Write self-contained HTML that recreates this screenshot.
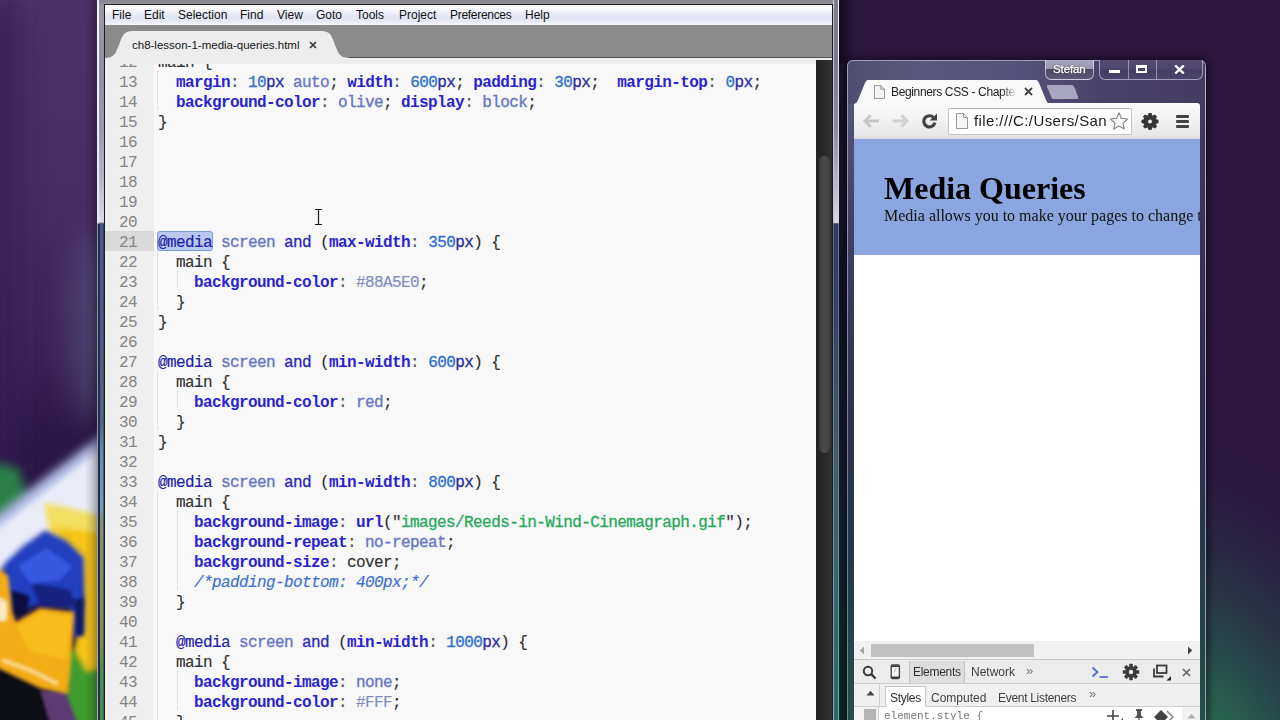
<!DOCTYPE html>
<html>
<head>
<meta charset="utf-8">
<title>Screen</title>
<style>
*{margin:0;padding:0;box-sizing:border-box;}
html,body{width:1280px;height:720px;overflow:hidden;background:#2a1640;}
body{position:relative;font-family:"Liberation Sans",sans-serif;}
.abs{position:absolute;}
#wall{position:absolute;left:0;top:0;width:1280px;height:720px;
 background:
  radial-gradient(ellipse 300px 440px at 1160px 850px, rgba(42,130,86,1) 0%, rgba(40,112,82,.95) 32%, rgba(38,80,76,.8) 52%, rgba(40,48,72,.6) 72%, rgba(42,32,70,.3) 86%, rgba(44,23,63,0) 100%),
  #2c173f;
}
#wallL{position:absolute;left:0;top:0;width:110px;height:720px;overflow:hidden;
 background:
  radial-gradient(ellipse 90px 260px at 105px 330px, rgba(92,92,130,.9) 0%, rgba(80,70,120,.5) 50%, rgba(70,50,110,0) 100%),
  linear-gradient(90deg,#3d2460 0%,#4a3266 60%,#4a3468 100%);
}
/* ---------- Sublime window ---------- */
#sub{position:absolute;left:97px;top:0;width:743px;height:720px;}
#sub .frame{position:absolute;left:1px;top:0;width:741px;height:720px;
 background:linear-gradient(180deg,#85858f 0px,#9a9aa4 6px,#908fa8 70px,#9a99b4 130px,#b8b8cc 180px,#dcdce8 222px,#343c5e 224px,#3a4666 330px,#465e6c 460px,#3a6668 600px,#2a6a66 720px);}
#sub .edgeL{position:absolute;left:0;top:0;width:2px;height:720px;background:linear-gradient(180deg,#f4f4f8 0,#e8e8f0 222px,#8890b0 224px,#8a9ab8 460px,#9ab0b8 720px);}
#sub .midL{position:absolute;left:3px;top:224px;width:3px;height:496px;background:linear-gradient(180deg,#4c5684 0,#56628e 200px,#6a8ab8 230px,#7a98b8 280px,#8e8e72 300px,#90885a 420px,#5a8a50 440px,#4e8a4c 496px);}
#sub .darkL{position:absolute;left:1px;top:224px;width:2px;height:496px;background:#262c44;}
#sub .edgeR{position:absolute;left:741px;top:0;width:1px;height:720px;background:linear-gradient(180deg,#f0f0f6 0,#dcdce6 222px,#6a7498 224px,#6a8aa0 460px,#7ab0b8 720px);}
#sub .edgeR2{position:absolute;left:736px;top:0;width:1px;height:720px;background:linear-gradient(180deg,#c8c8d8 0,#c0c0d0 222px,#5a6488 224px,#6a8aa0 460px,#8ab0c0 720px);}
#sub .bodyR{position:absolute;left:737px;top:0;width:4px;height:223px;background:linear-gradient(180deg,#7c7c90 0,#7a7a94 60px,#8c8ca8 130px,#b4b4cc 180px,#d8d8e8 223px);}
#sub .inner{position:absolute;left:7px;top:4px;width:729px;height:716px;background:#1c1c1c;}
#menubar{position:absolute;left:105px;top:5px;width:727px;height:20px;
 background:linear-gradient(180deg,#ffffff 0%,#f4f5fb 30%,#e2e5f4 55%,#e6e8f5 80%,#f6f7fc 100%);font-size:12px;color:#111;}
#menubar span{position:absolute;top:3px;white-space:nowrap;}
#tabbar{position:absolute;left:105px;top:25px;width:727px;height:33px;background:#8b8b8b;}
#tabline{position:absolute;left:105px;top:58px;width:727px;height:6px;background:#ededed;}
#tabtxt{position:absolute;left:132px;top:39px;font-size:11.5px;color:#151515;white-space:nowrap;}
#editor{position:absolute;left:105px;top:64px;width:711px;height:656px;background:#f8f8f8;overflow:hidden;}
#gutter{position:absolute;left:0;top:0;width:49px;height:656px;background:#efefef;}
#vscroll{position:absolute;left:816px;top:60px;width:16px;height:660px;background:linear-gradient(90deg,#222 0,#2a2a2a 60%,#323232 100%);}
#vthumb{position:absolute;left:819px;top:156px;width:11px;height:297px;border-radius:5px;background:linear-gradient(90deg,#3a3a3a,#4a4a4a 45%,#404040);}
.ln{position:absolute;left:0;width:32px;text-align:right;font:16px/20px "Liberation Mono",monospace;letter-spacing:-.6px;color:#858585;height:20px;margin-top:2px;}
.cl{position:absolute;left:53px;font:16px/20px "Liberation Mono",monospace;letter-spacing:-.6px;color:#303030;white-space:pre;height:20px;margin-top:2px;-webkit-text-stroke:.15px;}
.p{color:#2a24cf;font-weight:bold;-webkit-text-stroke:0;}
.n{color:#2f6fd0;-webkit-text-stroke:.3px;}
.u{color:#2a2aa2;-webkit-text-stroke:.3px;}
.v{color:#6677c6;-webkit-text-stroke:.35px;}
.h{color:#7f8cbd;}
.m{color:#2020a8;-webkit-text-stroke:.15px;}
.a{color:#2a2ab8;-webkit-text-stroke:.3px;}
.s{color:#26a95c;-webkit-text-stroke:.3px;}
.f{color:#2a24cf;font-weight:bold;-webkit-text-stroke:0;}
.c{color:#3a6fd2;font-style:italic;}
.k{color:#555;}
.guide{position:absolute;width:1px;background-image:linear-gradient(180deg,#c9c9c9 50%,rgba(0,0,0,0) 50%);background-size:1px 2px;}
</style>
</head>
<body>
<div id="wall"></div>
<div id="wallL"><svg class="abs" style="left:0;top:0" width="110" height="720" viewBox="0 0 110 720">
 <defs>
  <filter id="b14" x="-60%" y="-60%" width="220%" height="220%"><feGaussianBlur stdDeviation="14"/></filter>
  <filter id="b6" x="-40%" y="-40%" width="180%" height="180%"><feGaussianBlur stdDeviation="5"/></filter>
  <filter id="b3" x="-30%" y="-30%" width="160%" height="160%"><feGaussianBlur stdDeviation="2.6"/></filter>
  <filter id="b2" x="-30%" y="-30%" width="160%" height="160%"><feGaussianBlur stdDeviation="1.4"/></filter>
  <linearGradient id="wp" x1="0" y1="0" x2="0" y2="1">
   <stop offset="0" stop-color="#4b3266"/><stop offset=".3" stop-color="#462c62"/><stop offset=".5" stop-color="#3a2256"/><stop offset=".62" stop-color="#2b1846"/><stop offset="1" stop-color="#1a1030"/>
  </linearGradient>
 </defs>
 <rect width="110" height="720" fill="url(#wp)"/>
 <rect x="-30" y="0" width="50" height="480" fill="#361e56" opacity=".7" filter="url(#b14)"/>
 <ellipse cx="94" cy="325" rx="24" ry="95" fill="#56567e" opacity=".6" filter="url(#b14)"/>
 <filter id="ball" x="-10%" y="-10%" width="120%" height="120%"><feGaussianBlur stdDeviation="1.3"/></filter>
 <g filter="url(#ball)">
 <!-- green upper-left -->
 <path d="M-12 462 L18 468 L28 498 L-12 528 Z" fill="#2a8048" filter="url(#b6)"/>
 <!-- white petal -->
 <path d="M120 422 L97 439 L45 478 L-14 524 L-14 580 L20 560 L45 534 L80 545 L120 540 Z" fill="#b9c4ec" filter="url(#b6)"/>
 <path d="M120 436 L97 452 L45 492 L-14 538 L-14 575 L20 556 L45 530 L80 540 L120 530 Z" fill="#e9ecf7" filter="url(#b3)"/>
 <!-- bottom dark -->
 <path d="M-10 655 L60 688 L70 730 L-10 730 Z" fill="#0b0c12" filter="url(#b3)"/>
 <!-- green bottom-right -->
 <path d="M62 652 L115 640 L115 730 L52 730 L66 690 Z" fill="#3f9c2e" filter="url(#b3)"/>
 <!-- purple stem -->
 <path d="M40 690 L66 692 L80 730 L52 730 Z" fill="#5d3a72" filter="url(#b2)"/>
 <!-- yellow top/right -->
 <path d="M44 503 L70 508 L104 516 L104 600 L86 600 L80 556 L50 534 Z" fill="#f3df62" filter="url(#b3)"/>
 <path d="M52 528 L80 530 L104 535 L104 668 L86 672 L74 650 L84 600 L82 560 Z" fill="#f5c414" filter="url(#b3)"/>
 <!-- blue centre -->
 <path d="M4 564 L24 545 L45 531 L66 540 L84 558 L84 632 L74 638 L70 606 L40 604 L14 612 L6 596 Z" fill="#2340c0" filter="url(#b3)"/>
 <path d="M10 590 L30 596 L26 616 L12 616 Z" fill="#0a1040" filter="url(#b2)"/>
 <path d="M30 582 L70 590 L76 606 L40 606 Z" fill="#142080" filter="url(#b2)"/>
 <path d="M74 600 L84 598 L84 636 L76 636 Z" fill="#101a60" filter="url(#b2)"/>
 <path d="M18 566 L46 548 L72 566 L60 580 L30 584 Z" fill="#3558e0" filter="url(#b2)"/>
 <!-- orange bottom -->
 <path d="M-10 562 L8 576 L12 612 L16 622 L40 608 L74 612 L72 650 L68 694 L40 688 L-10 664 Z" fill="#f2ac14" filter="url(#b2)"/>
 <path d="M16 626 L42 612 L72 616 L66 660 L30 652 Z" fill="#f8bc1c" filter="url(#b2)"/>
 <path d="M2 660 L30 670 L58 684" stroke="#fdf0c8" stroke-width="3.2" fill="none" filter="url(#b2)" opacity=".85"/>
 <path d="M-2 596 L7 602 L7 620 L-2 622 Z" fill="#fbf3dc" filter="url(#b2)" opacity=".9"/>
 </g>
</svg></div>

<div class="abs" style="left:839px;top:0;width:16px;height:720px;background:linear-gradient(90deg,rgba(4,4,12,.62) 0,rgba(4,4,12,.5) 5px,rgba(4,4,12,.25) 10px,rgba(4,4,12,0) 16px)"></div>
<div class="abs" style="left:85px;top:0;width:12px;height:720px;background:linear-gradient(270deg,rgba(10,6,24,.32) 0,rgba(10,6,24,.12) 6px,rgba(10,6,24,0) 12px)"></div>
<div class="abs" style="left:839px;top:64px;width:9px;height:656px;background:linear-gradient(180deg,#17122a 0,#151228 240px,#131a2c 370px,#10262a 500px,#0d2c24 656px)"></div>
<div id="sub">
 <div class="frame"></div>
 <div class="edgeL"></div><div class="darkL"></div><div class="midL"></div>
 <div class="bodyR"></div><div class="edgeR"></div><div class="edgeR2"></div>
 <div class="inner"></div>
</div>
<div id="menubar">
 <span style="left:7px">File</span>
 <span style="left:39px">Edit</span>
 <span style="left:73px">Selection</span>
 <span style="left:135px">Find</span>
 <span style="left:172px">View</span>
 <span style="left:211px">Goto</span>
 <span style="left:251px">Tools</span>
 <span style="left:294px">Project</span>
 <span style="left:345px;letter-spacing:-.3px">Preferences</span>
 <span style="left:420px">Help</span>
</div>
<div id="tabbar">
 <svg class="abs" style="left:0;top:0" width="260" height="33" viewBox="0 0 260 33">
  <path d="M0 33 C10 33 11 27 14 20 C17 12 18 6 28 6 L216 6 C226 6 227 12 230 20 C233 27 234 33 244 33 Z" fill="#ededed"/>
 </svg>
</div>
<div id="tabline"></div>
<div class="abs" style="left:349px;top:57px;width:483px;height:1px;background:#555"></div>
<svg class="abs" style="left:309px;top:41px" width="8" height="8" viewBox="0 0 8 8"><path d="M1 1 L7 7 M7 1 L1 7" stroke="#3a3a3a" stroke-width="1.7"/></svg>
<div id="tabtxt">ch8-lesson-1-media-queries.html</div>
<div id="editor">
 <div id="gutter"></div>
 <!--LINES-->
<div class="abs" style="left:0;top:167px;width:49px;height:20px;background:#d9d9d9"></div>
<div class="abs" style="left:52px;top:167px;width:56px;height:20px;background:#b9c8ef;border:1px solid #7f97dc;border-radius:3px"></div>
<div class="guide" style="left:52px;top:7px;height:40px"></div>
<div class="guide" style="left:52px;top:187px;height:60px"></div>
<div class="guide" style="left:72px;top:207px;height:20px"></div>
<div class="guide" style="left:52px;top:307px;height:60px"></div>
<div class="guide" style="left:72px;top:327px;height:20px"></div>
<div class="guide" style="left:52px;top:427px;height:260px"></div>
<div class="guide" style="left:72px;top:447px;height:80px"></div>
<div class="guide" style="left:72px;top:607px;height:40px"></div>
<div class="ln" style="top:-13px">12</div>
<div class="cl" style="top:-13px">main {</div>
<div class="ln" style="top:7px">13</div>
<div class="cl" style="top:7px">  <b class="p">margin</b><span class="k">:</span> <span class="n">10</span><span class="u">px</span> <span class="v">auto</span>; <b class="p">width</b><span class="k">:</span> <span class="n">600</span><span class="u">px</span>; <b class="p">padding</b><span class="k">:</span> <span class="n">30</span><span class="u">px</span>;  <b class="p">margin-top</b><span class="k">:</span> <span class="n">0</span><span class="u">px</span>;</div>
<div class="ln" style="top:27px">14</div>
<div class="cl" style="top:27px">  <b class="p">background-color</b><span class="k">:</span> <span class="v">olive</span>; <b class="p">display</b><span class="k">:</span> <span class="v">block</span>;</div>
<div class="ln" style="top:47px">15</div>
<div class="cl" style="top:47px">}</div>
<div class="ln" style="top:67px">16</div>
<div class="ln" style="top:87px">17</div>
<div class="ln" style="top:107px">18</div>
<div class="ln" style="top:127px">19</div>
<div class="ln" style="top:147px">20</div>
<div class="ln" style="top:167px">21</div>
<div class="cl" style="top:167px"><span class="m">@media</span> <span class="v">screen</span> <span class="a">and</span> (<b class="p">max-width</b><span class="k">:</span> <span class="n">350</span><span class="u">px</span>) {</div>
<div class="ln" style="top:187px">22</div>
<div class="cl" style="top:187px">  main {</div>
<div class="ln" style="top:207px">23</div>
<div class="cl" style="top:207px">    <b class="p">background-color</b><span class="k">:</span> <span class="h">#88A5E0</span>;</div>
<div class="ln" style="top:227px">24</div>
<div class="cl" style="top:227px">  }</div>
<div class="ln" style="top:247px">25</div>
<div class="cl" style="top:247px">}</div>
<div class="ln" style="top:267px">26</div>
<div class="ln" style="top:287px">27</div>
<div class="cl" style="top:287px"><span class="m">@media</span> <span class="v">screen</span> <span class="a">and</span> (<b class="p">min-width</b><span class="k">:</span> <span class="n">600</span><span class="u">px</span>) {</div>
<div class="ln" style="top:307px">28</div>
<div class="cl" style="top:307px">  main {</div>
<div class="ln" style="top:327px">29</div>
<div class="cl" style="top:327px">    <b class="p">background-color</b><span class="k">:</span> <span class="v">red</span>;</div>
<div class="ln" style="top:347px">30</div>
<div class="cl" style="top:347px">  }</div>
<div class="ln" style="top:367px">31</div>
<div class="cl" style="top:367px">}</div>
<div class="ln" style="top:387px">32</div>
<div class="ln" style="top:407px">33</div>
<div class="cl" style="top:407px"><span class="m">@media</span> <span class="v">screen</span> <span class="a">and</span> (<b class="p">min-width</b><span class="k">:</span> <span class="n">800</span><span class="u">px</span>) {</div>
<div class="ln" style="top:427px">34</div>
<div class="cl" style="top:427px">  main {</div>
<div class="ln" style="top:447px">35</div>
<div class="cl" style="top:447px">    <b class="p">background-image</b><span class="k">:</span> <span class="f">url</span>("<span class="s">images/Reeds-in-Wind-Cinemagraph.gif</span>");</div>
<div class="ln" style="top:467px">36</div>
<div class="cl" style="top:467px">    <b class="p">background-repeat</b><span class="k">:</span> <span class="v">no-repeat</span>;</div>
<div class="ln" style="top:487px">37</div>
<div class="cl" style="top:487px">    <b class="p">background-size</b><span class="k">:</span> cover;</div>
<div class="ln" style="top:507px">38</div>
<div class="cl" style="top:507px">    <span class="c">/*padding-bottom: 400px;*/</span></div>
<div class="ln" style="top:527px">39</div>
<div class="cl" style="top:527px">  }</div>
<div class="ln" style="top:547px">40</div>
<div class="ln" style="top:567px">41</div>
<div class="cl" style="top:567px">  <span class="m">@media</span> <span class="v">screen</span> <span class="a">and</span> (<b class="p">min-width</b><span class="k">:</span> <span class="n">1000</span><span class="u">px</span>) {</div>
<div class="ln" style="top:587px">42</div>
<div class="cl" style="top:587px">  main {</div>
<div class="ln" style="top:607px">43</div>
<div class="cl" style="top:607px">    <b class="p">background-image</b><span class="k">:</span> <span class="v">none</span>;</div>
<div class="ln" style="top:627px">44</div>
<div class="cl" style="top:627px">    <b class="p">background-color</b><span class="k">:</span> <span class="h">#FFF</span>;</div>
<div class="ln" style="top:647px">45</div>
<div class="cl" style="top:647px">  }</div>
<!--/LINES-->
</div>
<div id="vscroll"></div>
<div id="vthumb"></div>

<svg class="abs" style="left:313px;top:208px" width="11" height="18" viewBox="0 0 11 18"><path d="M2 1.5 H9 M2 16.5 H9 M5.5 1.5 V16.5" fill="none" stroke="#1a1a1a" stroke-width="1.2"/></svg>
<!--CHROME-->
<style>
#chr{position:absolute;left:847px;top:60px;width:359px;height:670px;border-radius:6px 6px 0 0;
 background:linear-gradient(90deg,#504e70 0%,#5b597d 22%,#55517a 48%,#4a4369 70%,#443b62 100%);
 box-shadow:inset 0 0 0 1px rgba(190,188,215,.75),0 0 9px 2px rgba(5,3,12,.6);}
#chrL{position:absolute;left:848px;top:104px;width:6px;height:616px;background:linear-gradient(180deg,#55547a 0,#3f4264 120px,#2e3350 300px,#25374a 450px,#23504a 616px);}
#chrR{position:absolute;left:1200px;top:104px;width:5px;height:616px;background:linear-gradient(180deg,#443b62 0,#3a3058 120px,#2f2c50 300px,#28384a 450px,#245048 616px);}
#chrRe{position:absolute;left:1205px;top:66px;width:1px;height:654px;background:linear-gradient(180deg,#b5b2cf 0,#a8a6c4 200px,#8f9ab0 450px,#8ab0a8 654px);}
#chrLe{position:absolute;left:847px;top:66px;width:1px;height:654px;background:linear-gradient(180deg,#9c9ab8 0,#8888a8 200px,#6f7a95 450px,#6a9088 654px);}
#ctool{position:absolute;left:854px;top:103px;width:346px;height:36px;border-radius:3px 3px 0 0;
 background:linear-gradient(180deg,#fbfbfb 0%,#f1f1f1 50%,#e6e6e6 92%,#d2d2d2 100%);}
#curl{position:absolute;left:948px;top:108px;width:184px;height:27px;background:#fff;border:1px solid #c4c4c4;border-top-color:#b4b4b4;border-radius:2px;}
#curltxt{position:absolute;left:974px;top:112px;font-size:15px;color:#1a1a1a;white-space:nowrap;letter-spacing:.4px;}
#ctabtxt{position:absolute;left:891px;top:85px;font-size:12px;letter-spacing:-.35px;color:#222;white-space:nowrap;width:123px;overflow:hidden;}
#page{position:absolute;left:854px;top:139px;width:346px;height:502px;background:#fff;overflow:hidden;}
#blue{position:absolute;left:0;top:0;width:346px;height:116px;background:#8aa5df;}
#h1{position:absolute;left:30px;top:31px;font:bold 32px/37px "Liberation Serif",serif;color:#000;white-space:nowrap;}
#pp{position:absolute;left:30px;top:68px;font:16px/18px "Liberation Serif",serif;color:#111;white-space:nowrap;}
#hsb{position:absolute;left:854px;top:641px;width:346px;height:18px;background:#f1f1f1;}
#hth{position:absolute;left:17px;top:3px;width:163px;height:13px;background:#c1c1c1;}
#dt1{position:absolute;left:854px;top:659px;width:346px;height:25px;background:#ececec;border-top:1px solid #c8c8c8;border-bottom:1px solid #cfcfcf;font-size:12px;color:#333;}
#dt2{position:absolute;left:854px;top:684px;width:346px;height:23px;background:#f0f0f0;border-bottom:1px solid #d0d0d0;font-size:12px;color:#333;}
#dt3{position:absolute;left:854px;top:707px;width:346px;height:13px;background:#fff;overflow:hidden;}
.t{position:absolute;white-space:nowrap;}
</style>
<div id="chr"></div>
<div id="chrLe"></div><div id="chrRe"></div>
<div id="chrL"></div><div id="chrR"></div>
<!-- caption buttons -->
<div class="abs" style="left:1045px;top:60px;width:49px;height:20px;border:1px solid rgba(215,212,235,.8);border-top:none;border-radius:0 0 6px 6px;background:linear-gradient(180deg,#a9a6c0 0%,#9a97b4 45%,#4d4a68 50%,#5a5676 100%);"></div>
<div class="t" style="left:1053px;top:63px;font-size:11.5px;letter-spacing:-.1px;color:#fff;-webkit-text-stroke:.35px #fff;text-shadow:0 0 2px #222,0 0 1px #333;">Stefan</div>
<div class="abs" style="left:1099px;top:60px;width:104px;height:20px;border:1px solid rgba(200,196,225,.7);border-top:none;border-radius:0 0 6px 6px;background:linear-gradient(180deg,#544c72 0%,#4e466c 48%,#453d63 52%,#4b4369 100%);"></div>
<div class="abs" style="left:1128px;top:60px;width:1px;height:19px;background:rgba(200,196,225,.6)"></div>
<div class="abs" style="left:1156px;top:60px;width:1px;height:19px;background:rgba(200,196,225,.6)"></div>
<div class="abs" style="left:1109px;top:70px;width:11px;height:3px;background:#fff;"></div>
<div class="abs" style="left:1136px;top:65px;width:11px;height:8px;border:2px solid #fff;border-top-width:3px;"></div>
<svg class="abs" style="left:1174px;top:65px" width="11" height="9" viewBox="0 0 12 10"><path d="M1.2 0.5 L10.8 9.5 M10.8 0.5 L1.2 9.5" stroke="#fff" stroke-width="2.6"/></svg>
<!-- tab strip -->
<svg class="abs" style="left:853px;top:79px" width="240" height="26" viewBox="0 0 240 26">
 <path d="M0 26 C3 25 4 23 5 21 L12 4 C13 1.5 14 1 16 1 L182 1 C184 1 185 1.5 186 4 L193 21 C194 23 195 25 198 26 Z" fill="#f9f9f9"/>
 <path d="M195 6 L218 6 C220 6 220.5 6.5 221.5 8.5 L225 17.5 C225.6 19.5 225 20 223 20 L201 20 C199.5 20 199 19.5 198.3 18 L194.2 8 C193.6 6.5 194 6 195 6 Z" fill="#a9a6c2"/>
</svg>
<svg class="abs" style="left:874px;top:85px" width="11" height="14" viewBox="0 0 12 15"><path d="M0.5 0.5 H7.5 L11.5 4.5 V14.5 H0.5 Z" fill="#f4f4f4" stroke="#8c8c8c"/><path d="M7.5 0.5 V4.5 H11.5" fill="none" stroke="#8c8c8c"/></svg>
<div id="ctabtxt">Beginners CSS - Chapter</div>
<div class="abs" style="left:1002px;top:82px;width:13px;height:18px;background:linear-gradient(90deg,rgba(249,249,249,0),rgba(249,249,249,.85))"></div>
<svg class="abs" style="left:1024px;top:87px" width="9" height="9" viewBox="0 0 9 9"><path d="M1 1 L8 8 M8 1 L1 8" stroke="#444" stroke-width="1.8"/></svg>
<div id="ctool"></div>
<!-- nav icons -->
<svg class="abs" style="left:862px;top:113px" width="18" height="16" viewBox="0 0 18 16"><path d="M8.6 2.2 L3 8 L8.6 13.8 M3.4 8 H17" fill="none" stroke="#c6c6c6" stroke-width="3"/></svg>
<svg class="abs" style="left:891px;top:113px" width="18" height="16" viewBox="0 0 18 16"><path d="M10.4 2.2 L16 8 L10.4 13.8 M15.6 8 H1.8" fill="none" stroke="#d2d2d2" stroke-width="3"/></svg>
<svg class="abs" style="left:920px;top:112px" width="18" height="18" viewBox="0 0 18 18"><path d="M13.6 5.6 A5.6 5.6 0 1 0 14.9 10.6" fill="none" stroke="#434343" stroke-width="3.2"/><path d="M17 1.6 V8.6 H9.6 Z" fill="#434343"/></svg>
<div id="curl"></div>
<svg class="abs" style="left:956px;top:113px" width="12" height="16" viewBox="0 0 12 16"><path d="M0.5 0.5 H7.5 L11.5 4.5 V15.5 H0.5 Z" fill="#f6f6f6" stroke="#9a9a9a"/><path d="M7.5 0.5 V4.5 H11.5" fill="none" stroke="#9a9a9a"/></svg>
<div id="curltxt">file:///C:/Users/San</div>
<svg class="abs" style="left:1109px;top:111px" width="20" height="20" viewBox="0 0 20 20"><path d="M10 1.8 L12.5 7.4 L18.6 8 L14 12.1 L15.3 18.1 L10 15 L4.7 18.1 L6 12.1 L1.4 8 L7.5 7.4 Z" fill="#fff" stroke="#8a8a8a" stroke-width="1.2" stroke-linejoin="round"/></svg>
<svg class="abs" style="left:1141px;top:112px" width="18" height="19" viewBox="-9 -9 18 19"><g fill="#353535" transform="translate(0,.5)"><circle r="5.7"/><g id="tt"><path d="M-2.7 -5 L-1.4 -8.5 L1.4 -8.5 L2.7 -5 Z M-2.7 5 L-1.4 8.5 L1.4 8.5 L2.7 5 Z"/></g><use href="#tt" transform="rotate(45)"/><use href="#tt" transform="rotate(90)"/><use href="#tt" transform="rotate(135)"/></g><circle cy=".5" r="2" fill="#f0f0f0"/></svg>
<div class="abs" style="left:1176px;top:115px;width:13px;height:3px;background:#444;border-radius:1px;box-shadow:0 5px 0 #444,0 10px 0 #444;"></div>
<!-- page -->
<div id="page"><div id="blue"></div><div id="h1">Media Queries</div><div id="pp">Media allows you to make your pages to change to</div></div>
<div id="hsb"><div id="hth"></div>
 <svg class="abs" style="left:5px;top:5px" width="6" height="9" viewBox="0 0 6 9"><path d="M5 0.5 L0.8 4.5 L5 8.5 Z" fill="#a6a6a6"/></svg>
 <svg class="abs" style="left:333px;top:5px" width="6" height="9" viewBox="0 0 6 9"><path d="M1 0.5 L5.2 4.5 L1 8.5 Z" fill="#404040"/></svg>
</div>
<div id="dt1">
 <svg class="abs" style="left:8px;top:5px" width="15" height="15" viewBox="0 0 15 15"><circle cx="6" cy="6" r="4.2" fill="none" stroke="#3a3a3a" stroke-width="2"/><path d="M9.2 9.2 L13.5 13.5" stroke="#3a3a3a" stroke-width="2.4"/></svg>
 <svg class="abs" style="left:36px;top:4px" width="11" height="16" viewBox="0 0 11 16"><rect x="1.2" y="1" width="8.2" height="13.6" rx="1.4" fill="#f4f4f4" stroke="#3c3c3c" stroke-width="1.3"/><path d="M1.5 2.2 H9 M1.5 13.2 H9" stroke="#3c3c3c" stroke-width="1.6"/><path d="M6.2 4.2 L4 8.4" stroke="#aaa" stroke-width=".9"/></svg>
 <div class="abs" style="left:55px;top:1px;width:56px;height:22px;background:#dedede;border-left:1px solid #c4c4c4;border-right:1px solid #c4c4c4;"></div>
 <div class="t" style="left:59px;top:5px;color:#303030;letter-spacing:-.3px">Elements</div>
 <div class="t" style="left:117px;top:5px;color:#404040">Network</div>
 <div class="t" style="left:172px;top:3px;color:#777;font-size:13px">»</div>
 <svg class="abs" style="left:237px;top:6px" width="18" height="13" viewBox="0 0 18 13"><path d="M1.5 1.5 L6.5 6 L1.5 10.5" fill="none" stroke="#5a6fd8" stroke-width="2"/><path d="M8.5 11 H17" stroke="#5a6fd8" stroke-width="1.8"/></svg>
 <svg class="abs" style="left:268px;top:3px" width="18" height="18" viewBox="-9 -9 18 18"><g fill="#3a3a3a"><circle r="5.8"/><g id="t2"><rect x="-1.8" y="-8.2" width="3.6" height="16.4" rx=".6"/></g><use href="#t2" transform="rotate(45)"/><use href="#t2" transform="rotate(90)"/><use href="#t2" transform="rotate(135)"/></g><circle r="2.2" fill="#ececec"/></svg>
 <svg class="abs" style="left:298px;top:4px" width="20" height="18" viewBox="0 0 20 18"><rect x="5" y="1.5" width="9.5" height="7.5" fill="none" stroke="#3a3a3a" stroke-width="1.8"/><path d="M2 4.5 V12.5 H11.5" fill="none" stroke="#3a3a3a" stroke-width="1.8"/><path d="M19 12 V16.5 H14.5 Z" fill="#222"/></svg>
 <svg class="abs" style="left:328px;top:8px" width="9" height="9" viewBox="0 0 9 9"><path d="M1 1 L8 8 M8 1 L1 8" stroke="#6a6a6a" stroke-width="1.7"/></svg>
</div>
<div id="dt2">
 <div class="abs" style="left:25px;top:0;width:1px;height:36px;background:#cfcfcf"></div>
 <svg class="abs" style="left:12px;top:6px" width="9" height="6" viewBox="0 0 9 6"><path d="M0.5 5.5 L4.5 0.8 L8.5 5.5 Z" fill="#444"/></svg>
 <div class="abs" style="left:31px;top:2px;width:41px;height:22px;background:#fff;border:1px solid #c8c8c8;border-bottom:none;"></div>
 <div class="t" style="left:36px;top:7px;color:#303030;letter-spacing:-.3px">Styles</div>
 <div class="t" style="left:77px;top:7px;color:#404040">Computed</div>
 <div class="t" style="left:144px;top:7px;color:#404040;letter-spacing:-.3px">Event Listeners</div>
 <div class="t" style="left:235px;top:2px;color:#777;font-size:13px">»</div>
</div>
<div id="dt3">
 <div class="abs" style="left:0;top:0;width:25px;height:13px;background:#f3f3f3;border-right:1px solid #cfcfcf"></div>
 <div class="abs" style="left:10px;top:2px;width:12px;height:12px;background:#b4b4b4"></div>
 <div class="t" style="left:30px;top:3px;font:11px/13px 'Liberation Mono',monospace;color:#777">element.style {</div>
 <svg class="abs" style="left:252px;top:3px" width="18" height="12" viewBox="0 0 18 12"><path d="M7 0 V12 M1 6 H13" stroke="#444" stroke-width="1.6"/><path d="M17 8 V11 H14 Z" fill="#444"/></svg>
 <svg class="abs" style="left:279px;top:2px" width="12" height="12" viewBox="0 0 12 12"><path d="M3 0 H9 V2 H8 V6 L10.5 9 H1.5 L4 6 V2 H3 Z M5.4 9 H6.6 V14 H5.4Z" fill="#555"/></svg>
 <svg class="abs" style="left:300px;top:3px" width="20" height="12" viewBox="0 0 20 12"><path d="M7 0 L14 7 L7 14 L0 7 Z" fill="#444"/><path d="M13 1 L19 7 L13 13" fill="none" stroke="#888" stroke-width="1.5"/></svg>
 <div class="abs" style="left:328px;top:0;width:18px;height:13px;background:#f1f1f1"></div>
 <svg class="abs" style="left:333px;top:6px" width="9" height="6" viewBox="0 0 9 6"><path d="M0.5 5.5 L4.5 0.8 L8.5 5.5 Z" fill="#b0b0b0"/></svg>
</div>

<!--/CHROME-->
</body>
</html>
